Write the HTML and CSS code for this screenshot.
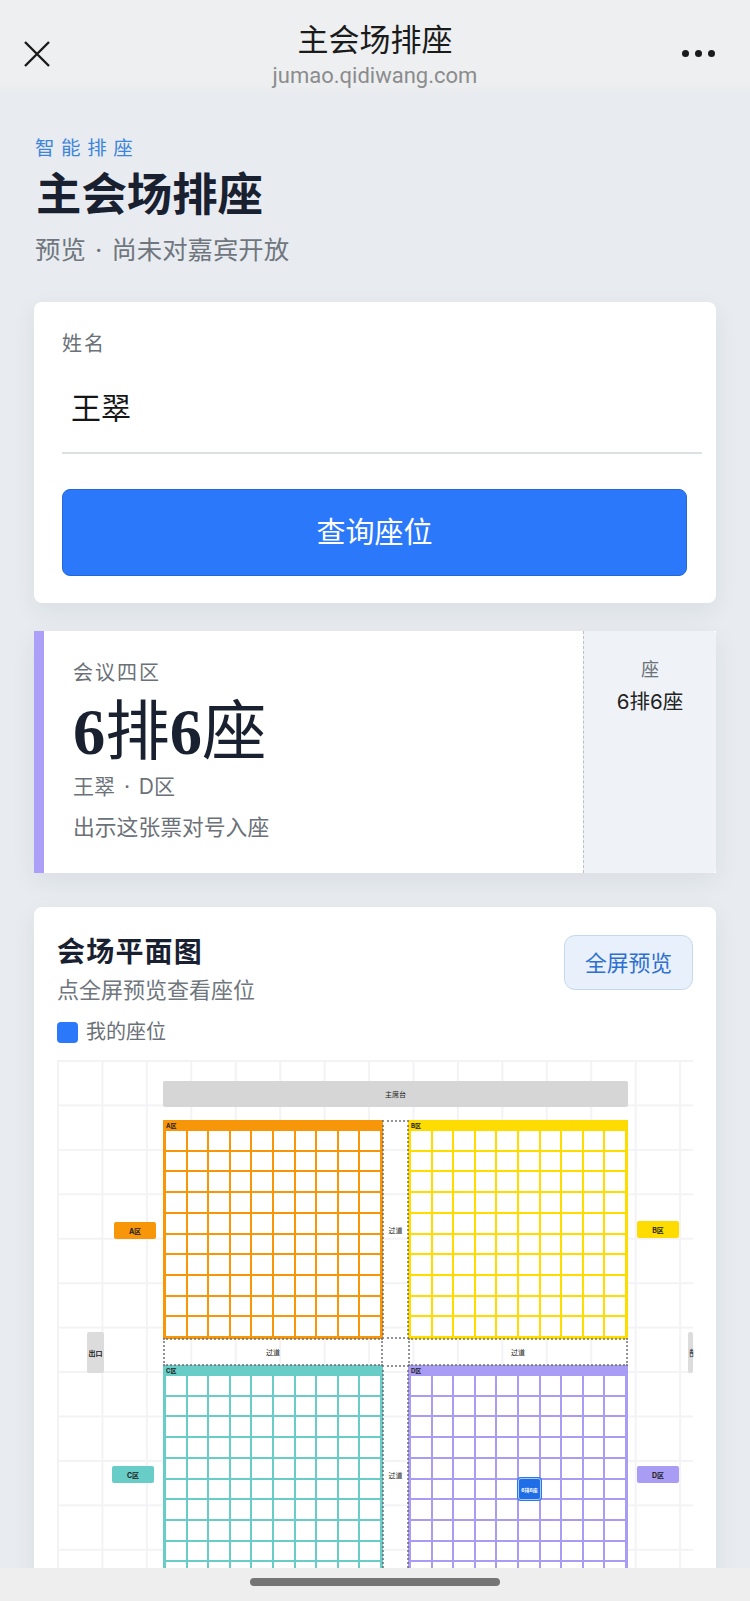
FILE: index.html
```html
<!DOCTYPE html>
<html lang="zh-CN">
<head>
  <meta charset="UTF-8" />
  <title>主会场排座</title>
  <link rel="stylesheet" href="styles.css">
</head>
<body>
  <header class="nav">
    <svg class="nav-close" width="26" height="26" viewBox="0 0 26 26"><path d="M1 1 L25 25 M25 1 L1 25" stroke="#1a1a1a" stroke-width="2.4" fill="none"/></svg>
    <div class="nav-center">
      <div class="nav-title">主会场排座</div>
      <div class="nav-url">jumao.qidiwang.com</div>
    </div>
    <div class="nav-more"><i></i><i></i><i></i></div>
  </header>

  <main class="page">
    <div class="intro">
      <div class="eyebrow">智能排座</div>
      <h1>主会场排座</h1>
      <p class="intro-sub">预览 · 尚未对嘉宾开放</p>
    </div>

    <section class="card form-card">
      <label class="field-label" for="guest">姓名</label>
      <input id="guest" class="field-input" type="text" value="王翠" />
      <button class="query-btn">查询座位</button>
    </section>

    <section class="ticket">
      <div class="ticket-main">
        <div class="ticket-zone">会议四区</div>
        <div class="ticket-seat"><b>6</b>排<b>6</b>座</div>
        <div class="ticket-line">王翠 · D区</div>
        <div class="ticket-line ticket-hint">出示这张票对号入座</div>
      </div>
      <div class="ticket-side">
        <div class="side-label">座</div>
        <div class="side-value">6排6座</div>
      </div>
    </section>

    <section class="card map-card">
      <div class="map-head">
        <div>
          <h2>会场平面图</h2>
          <p class="map-sub">点全屏预览查看座位</p>
        </div>
        <button class="full-btn">全屏预览</button>
      </div>
      <div class="legend"><span class="legend-dot"></span>我的座位</div>

      <div class="map">
        <div class="item stage">主席台</div>

        <div class="item zone zone-a"><div class="zone-name">A区</div><div class="seats"></div></div>
        <div class="item zone zone-b"><div class="zone-name">B区</div><div class="seats"></div></div>
        <div class="item zone zone-c"><div class="zone-name">C区</div><div class="seats"></div></div>
        <div class="item zone zone-d"><div class="zone-name">D区</div><div class="seats"></div></div>

        <div class="item aisle aisle-top">过道</div>
        <div class="item aisle aisle-bottom">过道</div>
        <div class="item aisle aisle-left">过道</div>
        <div class="item aisle aisle-right">过道</div>

        <div class="item tag tag-a">A区</div>
        <div class="item tag tag-b">B区</div>
        <div class="item tag tag-c">C区</div>
        <div class="item tag tag-d">D区</div>

        <div class="item exit exit-left">出口</div>
        <div class="item exit exit-right">出口</div>

        <div class="item my-seat">6排6座</div>
      </div>
    </section>
  </main>

  <div class="home-bar"><span></span></div>

  <script>
    // 10 x 10 seats in every zone
    document.querySelectorAll('.seats').forEach(function(box) {
      for (let i = 0; i < 100; i++) {
        box.appendChild(document.createElement('span'));
      }
    });
  </script>
</body>
</html>
```

FILE: styles.css
```css
* {
  box-sizing: border-box;
}
html, body {
  height: 100%;
}
body {
  margin: 0;
  background: #e8ecf0;
  font-family: "Inter", "Noto Sans CJK SC", sans-serif;
  overflow: hidden;
  position: relative;
}
h1, h2, p {
  margin: 0;
}

.nav {
  height: 93px;
  background: linear-gradient(#eeeff0 85%, #e9ecef);
  display: flex;
  justify-content: space-between;
  align-items: flex-start;
  padding: 41px 35px 0 24px;
  position: relative;
}
.nav-center {
  position: absolute;
  top: 17px;
  left: 0;
  right: 0;
  text-align: center;
}
.nav-title {
  font-size: 31px;
  line-height: 45px;
  color: #1b1b1b;
}
.nav-url {
  font-family: "Roboto", sans-serif;
  font-size: 22px;
  line-height: 28px;
  color: #8a8c8e;
}
.nav-more {
  display: flex;
  gap: 6px;
  margin-top: 9px;
}
.nav-more i {
  width: 7px;
  height: 7px;
  border-radius: 50%;
  background: #1b1b1b;
}

.page {
  padding: 0 34px;
}
.intro {
  padding: 42px 1px 0;
  height: 209px;
}
.eyebrow {
  font-size: 19.5px;
  line-height: 26px;
  letter-spacing: 6.6px;
  color: #3d85d8;
}
.intro h1 {
  font-size: 45.4px;
  line-height: 60px;
  font-weight: 700;
  color: #192130;
  margin-top: 4px;
  margin-left: 1px;
}
.intro-sub {
  font-size: 25.4px;
  line-height: 36px;
  word-spacing: 2px;
  color: #70767e;
  margin-top: 7px;
}

.card {
  background: #fff;
  border-radius: 8px;
  box-shadow: 0 8px 24px rgba(30, 40, 70, 0.07);
}
.form-card {
  height: 301px;
  padding: 27px 14px 0 28px;
}
.field-label {
  display: block;
  font-size: 20px;
  line-height: 30px;
  letter-spacing: 2px;
  color: #6b7178;
}
.field-input {
  display: block;
  width: 100%;
  height: 95px;
  border: none;
  border-bottom: 2px solid #dcdfe3;
  padding: 0 9px;
  font-family: inherit;
  font-size: 30px;
  color: #151515;
  background: none;
  outline: none;
}
.query-btn {
  display: block;
  width: 625px;
  height: 87px;
  margin-top: 35px;
  padding-bottom: 6px;
  border: 1px solid #2468d8;
  border-radius: 8px;
  background: #2b78fb;
  color: #fff;
  font-family: inherit;
  font-size: 29px;
}

.ticket {
  display: flex;
  height: 242px;
  margin-top: 28px;
  background: #fff;
  border-left: 10px solid #ab9ff8;
  box-shadow: 0 8px 24px rgba(30, 40, 70, 0.07);
}
.ticket-main {
  flex: 1;
  padding: 27px 0 0 29px;
}
.ticket-zone {
  font-size: 20px;
  line-height: 30px;
  letter-spacing: 2px;
  color: #6b7178;
}
.ticket-seat {
  font-family: "Liberation Serif", "Noto Sans CJK SC", serif;
  font-size: 64.5px;
  line-height: 76px;
  color: #192130;
  margin-top: 7px;
}
.ticket-line {
  font-size: 21px;
  line-height: 30px;
  word-spacing: 3px;
  color: #6b7178;
  margin-top: 1px;
}
.ticket-hint {
  font-size: 21.8px;
  margin-top: 10px;
}
.ticket-side {
  width: 133px;
  border-left: 1px dashed #bcc0c8;
  background: #eff2f6;
  text-align: center;
  padding-top: 26px;
  border-radius: 0 4px 4px 0;
}
.side-label {
  font-size: 18px;
  line-height: 26px;
  color: #6b7178;
}
.side-value {
  font-size: 20.5px;
  line-height: 30px;
  color: #222;
  margin-top: 4px;
}

.map-card {
  margin-top: 34px;
  height: 760px;
  padding: 28px 23px 0;
}
.map-head {
  display: flex;
  justify-content: space-between;
  align-items: flex-start;
}
.map-head h2 {
  font-size: 28px;
  line-height: 36px;
  font-weight: 700;
  letter-spacing: 1.2px;
  color: #192130;
  margin-top: -1px;
}
.map-sub {
  font-size: 22px;
  line-height: 32px;
  color: #70767e;
  margin-top: 4px;
}
.full-btn {
  width: 129px;
  height: 55px;
  padding-bottom: 3px;
  border: 1.5px solid #c6d8ec;
  border-radius: 11px;
  background: #e8f1fb;
  color: #2f6fd0;
  font-family: inherit;
  font-size: 21.8px;
}
.legend {
  display: flex;
  align-items: center;
  gap: 8px;
  margin-top: 11px;
  font-size: 20px;
  line-height: 30px;
  color: #6b7178;
}
.legend-dot {
  width: 21px;
  height: 21px;
  border-radius: 4px;
  background: #2b78fb;
}

/* free canvas: everything inside is placed by venue coordinates */
.map {
  position: relative;
  height: 560px;
  margin-top: 13px;
  width: 636px;
  background-color: #fff;
  background-image:
    linear-gradient(#f3f3f6 1.5px, transparent 1.5px),
    linear-gradient(90deg, #f3f3f6 1.5px, transparent 1.5px);
  background-size: 44.45px 44.45px;
}
.item {
  position: absolute;
  display: flex;
  align-items: center;
  justify-content: center;
  font-size: 7px;
  color: #222;
}
.stage {
  left: 106px;
  top: 21px;
  width: 465px;
  height: 26px;
  background: #d6d6d6;
  border-radius: 2px;
}
.zone {
  width: 220px;
  height: 219px;
  display: block;
  background: var(--zone);
}
.zone-name {
  height: 11px;
  line-height: 11px;
  padding-left: 3px;
  font-weight: 700;
  font-size: 6px;
}
.seats {
  display: grid;
  grid-template-columns: repeat(10, 1fr);
  grid-template-rows: repeat(10, 1fr);
  gap: 2px;
  height: 205px;
  padding: 0 3px;
}
.seats span {
  background: #fff;
}
.zone-a { left: 106px; top: 60px; --zone: #f8960a; }
.zone-b { left: 351px; top: 60px; --zone: #ffdc00; }
.zone-c { left: 106px; top: 305px; --zone: #67cdc6; }
.zone-d { left: 351px; top: 305px; --zone: #a99cf5; }

.aisle {
  border: 2px dotted rgba(100, 100, 110, 0.7);
}
.aisle-top { left: 106px; top: 278px; width: 220px; height: 28px; }
.aisle-bottom { left: 351px; top: 278px; width: 220px; height: 28px; }
.aisle-left { left: 325px; top: 60px; width: 27px; height: 219px; }
.aisle-right { left: 325px; top: 305px; width: 27px; height: 219px; }

.tag {
  width: 42px;
  height: 17px;
  border-radius: 2px;
  font-weight: 700;
}
.tag-a { left: 57px; top: 162px; background: #f8960a; }
.tag-b { left: 580px; top: 161px; background: #ffdc00; }
.tag-c { left: 55px; top: 406px; background: #67cdc6; }
.tag-d { left: 580px; top: 406px; background: #a99cf5; }

.exit {
  width: 17px;
  height: 41px;
  top: 272px;
  background: #dcdcdc;
  border-radius: 2px;
  font-weight: 700;
  white-space: nowrap;
}
.exit-left { left: 30px; }
.exit-right {
  left: 631px;
  width: 5px;
  font-size: 4px;
  writing-mode: vertical-rl;
}

.my-seat {
  left: 461px;
  top: 418px;
  width: 23px;
  height: 22px;
  background: #1f6ee8;
  border: 1.5px solid #a9c9f7;
  box-shadow: 0 0 0 1px #2b78e8;
  border-radius: 3px;
  color: #fff;
  font-size: 5px;
  font-weight: 700;
  white-space: nowrap;
}

.home-bar {
  position: absolute;
  left: 0;
  right: 0;
  bottom: 0;
  height: 33px;
  background: #eeeeee;
  display: flex;
  justify-content: center;
  padding-top: 10px;
}
.home-bar span {
  width: 250px;
  height: 8px;
  border-radius: 4px;
  background: #757575;
}
```
